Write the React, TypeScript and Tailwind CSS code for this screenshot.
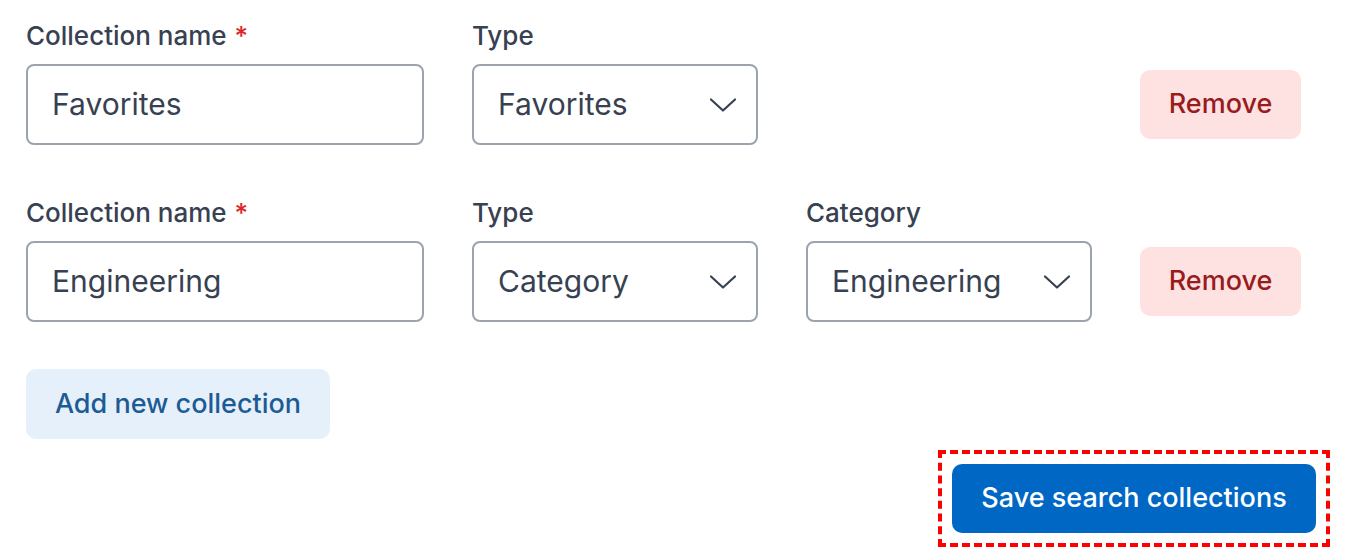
type Row = {
  name: string;
  type: string;
  category?: string;
};

const rows: Row[] = [
  { name: 'Favorites', type: 'Favorites' },
  { name: 'Engineering', type: 'Category', category: 'Engineering' },
];

function Label({ text, required }: { text: string; required?: boolean }) {
  return (
    <div className="h-[32px] mb-[12px] text-[26px] leading-[32px] font-medium text-[#374151]">
      {text}
      {required && <span className="ml-[8px] text-[#dc2626]">*</span>}
    </div>
  );
}

function Chevron() {
  return (
    <svg width="26" height="14" viewBox="0 0 26 14" fill="none">
      <polyline points="1,1.5 13,12.5 25,1.5" stroke="#374151" strokeWidth="2.2" strokeLinecap="round" strokeLinejoin="round" />
    </svg>
  );
}

function Select({ value }: { value: string }) {
  return (
    <div className="flex h-[81px] items-center justify-between rounded-[8px] border-2 border-[#9ca3af] bg-white pl-[24px] pr-[20px] text-[30px] text-[#374151]">
      <span>{value}</span>
      <Chevron />
    </div>
  );
}

function App() {
  return (
    <div className="min-h-screen bg-white pl-[26px] pt-[20px] font-['Inter',sans-serif]">
      <div className="flex flex-col gap-[52px]">
        {rows.map((row, i) => (
          <div
            key={i}
            className="grid grid-cols-[398px_286px_286px_161px] gap-x-[48px] items-end"
          >
            <div>
              <Label text="Collection name" required />
              <div className="flex h-[81px] items-center rounded-[8px] border-2 border-[#9ca3af] bg-white px-[24px] text-[30px] text-[#374151]">
                {row.name}
              </div>
            </div>
            <div>
              <Label text="Type" />
              <Select value={row.type} />
            </div>
            <div>
              {row.category && (
                <>
                  <Label text="Category" />
                  <Select value={row.category} />
                </>
              )}
            </div>
            <div className="flex h-[81px] items-center">
              <button className="h-[69px] w-[161px] rounded-[10px] bg-[#fee2e2] text-[27px] font-medium text-[#991b1b]">
                Remove
              </button>
            </div>
          </div>
        ))}
      </div>

      <button className="mt-[47px] h-[70px] w-[304px] rounded-[10px] bg-[#e6f0fb] text-[27px] font-medium text-[#1d5b94]">
        Add new collection
      </button>

      <div className="flex justify-end pr-[32px] pt-[11px]">
        <div className="border-4 border-dashed border-[#ff0000] p-[10px]">
          <button className="block h-[69px] w-[364px] rounded-[10px] bg-[#0067c5] text-[27px] font-medium text-white">
            Save search collections
          </button>
        </div>
      </div>
    </div>
  );
}

export default App;
